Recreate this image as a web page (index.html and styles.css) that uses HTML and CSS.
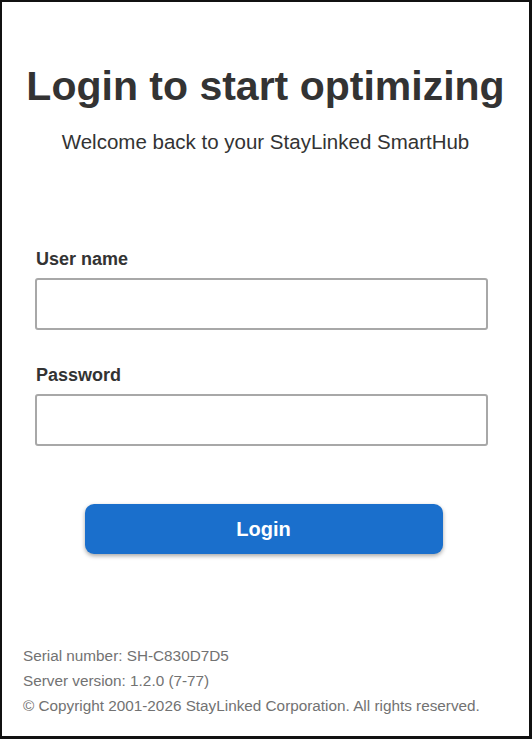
FILE: index.html
```html
<!DOCTYPE html>
<html>
<head>
<meta charset="utf-8">
<link rel="stylesheet" href="styles.css">
</head>
<body>
<div class="frame">
  <div class="head">
    <h1 class="title">Login to start optimizing</h1>
    <p class="subtitle">Welcome back to your StayLinked SmartHub</p>
  </div>
  <form class="form">
    <label class="label">User name</label>
    <input class="input" type="text">
    <label class="label label-second">Password</label>
    <input class="input" type="password">
    <div class="btn-row"><button type="button" class="btn">Login</button></div>
  </form>
  <div class="footer">
    <div class="fline">Serial number: SH-C830D7D5</div>
    <div class="fline">Server version: 1.2.0 (7-77)</div>
    <div class="fline">© Copyright 2001-2026 StayLinked Corporation. All rights reserved.</div>
  </div>
</div>
</body>
</html>
```
FILE: styles.css
```css
html, body { margin: 0; padding: 0; background: #fff; }
body { font-family: "Liberation Sans", Arial, sans-serif; color: #333; }
.frame {
  box-sizing: border-box;
  width: 532px;
  height: 739px;
  border-style: solid;
  border-color: #111;
  border-width: 2px 3px 3px 2px;
  display: flex;
  flex-direction: column;
}
.head { text-align: center; padding-top: 60px; }
.title { margin: 0; font-size: 41px; font-weight: bold; line-height: 48px; color: #333; }
.subtitle { margin: 20px 0 0; font-size: 20.5px; line-height: 24px; color: #333; }
.form { display: flex; flex-direction: column; padding: 0 41px 0 33px; margin-top: 94px; }
.label { font-size: 18px; font-weight: bold; line-height: 22px; color: #333; padding-left: 1px; }
.label-second { margin-top: 34px; }
.input {
  margin-top: 8px;
  height: 52px;
  box-sizing: border-box;
  border: 2px solid #a8a8a8;
  border-radius: 3px;
  background: #fff;
}
.label-second + .input { margin-top: 8px; }
.btn-row { display: flex; justify-content: center; margin-top: 58px; padding-left: 4px; }
.btn {
  width: 358px;
  height: 50px;
  border: none;
  border-radius: 9px;
  background: #1a6fcc;
  color: #fff;
  font-family: "Liberation Sans", Arial, sans-serif;
  font-size: 20px;
  font-weight: bold;
  box-shadow: 0 2px 4px rgba(0,0,0,0.35);
}
.footer { margin-top: auto; padding: 0 0 18px 21px; color: #727272; font-size: 15.3px; }
.fline { line-height: 25px; }
```
